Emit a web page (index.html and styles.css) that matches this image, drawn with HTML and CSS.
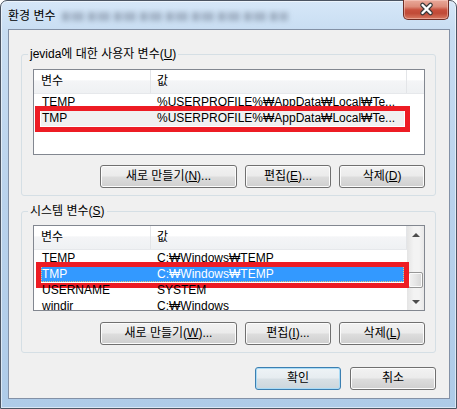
FILE: index.html
```html
<!DOCTYPE html>
<html lang="ko">
<head>
<meta charset="utf-8">
<title>환경 변수</title>
<link rel="stylesheet" href="styles.css">
</head>
<body>
<div class="window">
  <div class="titlebar">
    <span class="title">환경 변수</span>
    <span class="ghost" aria-hidden="true"></span>
    <div class="close">
      <svg width="44" height="17" viewBox="0 0 44 17">
        <path d="M18.5 4 L26.5 12 M26.5 4 L18.5 12" stroke="#3a3a3a" stroke-width="4.6" stroke-linecap="round"/>
        <path d="M18.5 4 L26.5 12 M26.5 4 L18.5 12" stroke="#ffffff" stroke-width="2.4" stroke-linecap="round"/>
      </svg>
    </div>
  </div>
  <div class="client">
    <fieldset class="group g1">
      <legend>jevida에 대한 사용자 변수(<u>U</u>)</legend>
      <div class="list">
        <div class="list-main">
          <div class="hdr"><span class="h1">변수</span><span class="h2">값</span><span class="h3"></span></div>
          <div class="row"><span class="c1">TEMP</span><span class="c2">%USERPROFILE%₩AppData₩Local₩Te...</span></div>
          <div class="row sel-gray"><span class="c1">TMP</span><span class="c2">%USERPROFILE%₩AppData₩Local₩Te...</span><span class="mark"></span></div>
        </div>
      </div>
      <div class="btns">
        <button class="btn w-new">새로 만들기(<u>N</u>)...</button>
        <button class="btn w-sm">편집(<u>E</u>)...</button>
        <button class="btn w-sm">삭제(<u>D</u>)</button>
      </div>
    </fieldset>

    <fieldset class="group g2">
      <legend>시스템 변수(<u>S</u>)</legend>
      <div class="list">
        <div class="list-main">
          <div class="hdr"><span class="h1">변수</span><span class="h2">값</span><span class="h3"></span></div>
          <div class="row"><span class="c1">TEMP</span><span class="c2">C:₩Windows₩TEMP</span></div>
          <div class="row sel-blue"><span class="c1">TMP</span><span class="c2">C:₩Windows₩TEMP</span><span class="mark mark2"></span></div>
          <div class="row"><span class="c1">USERNAME</span><span class="c2">SYSTEM</span></div>
          <div class="row"><span class="c1">windir</span><span class="c2">C:₩Windows</span></div>
        </div>
        <div class="sb">
          <div class="sb-btn"><span class="tri-up"></span></div>
          <div class="sb-track"><div class="sb-thumb"></div></div>
          <div class="sb-btn"><span class="tri-down"></span></div>
        </div>
      </div>
      <div class="btns">
        <button class="btn w-new">새로 만들기(<u>W</u>)...</button>
        <button class="btn w-sm">편집(<u>I</u>)...</button>
        <button class="btn w-sm">삭제(<u>L</u>)</button>
      </div>
    </fieldset>

    <div class="dlg-btns">
      <button class="btn w-dlg default">확인</button>
      <button class="btn w-dlg">취소</button>
    </div>
  </div>
</div>
</body>
</html>
```
FILE: styles.css
```css
* { box-sizing: border-box; }
html, body { margin: 0; padding: 0; }
body {
  width: 457px;
  height: 409px;
  overflow: hidden;
  background: #ffffff;
  font-family: "Liberation Sans", "DejaVu Sans", "Noto Sans CJK KR", sans-serif;
  font-size: 12px;
  color: #000;
}

.window {
  width: 457px;
  height: 409px;
  border: 1px solid #4b5462;
  border-radius: 7px 7px 0 0;
  background: linear-gradient(180deg, #d6e7f8 0px, #c8ddf2 30px, #b9d2ec 200px, #aecbe8 100%);
  box-shadow: inset 0 0 0 1px rgba(255, 255, 255, 0.55);
  padding: 0 6px 9px 7px;
  display: flex;
  flex-direction: column;
}

.titlebar {
  height: 28px;
  display: flex;
  align-items: flex-start;
  flex: none;
}
.title {
  padding-top: 7px;
  line-height: 17px;
  color: #000;
}
.ghost {
  margin-left: 6px;
  margin-top: 11px;
  width: 226px;
  height: 9px;
  background: repeating-linear-gradient(90deg, rgba(70, 80, 100, 0.35) 0 7px, rgba(70, 80, 100, 0.1) 7px 10px, rgba(70, 80, 100, 0.3) 10px 22px, transparent 22px 26px);
  filter: blur(2.5px);
}
.close {
  margin-left: auto;
  margin-right: 1px;
  margin-top: -1px;
  width: 46px;
  height: 20px;
  border: 1px solid #6e2d25;
  border-top: none;
  border-radius: 0 0 5px 5px;
  background: linear-gradient(180deg, #e9a99a 0%, #dd8c7a 35%, #c8503d 52%, #c04a37 70%, #d87a62 100%);
  box-shadow: inset 0 0 0 1px rgba(255, 220, 210, 0.45);
  display: flex;
  align-items: center;
  justify-content: center;
}
.close svg { display: block; }

.client {
  flex: 1;
  background: #f0f0f0;
  border: 1px solid #8391a6;
  padding: 17px 13px 8px 12px;
  display: flex;
  flex-direction: column;
}

.group {
  margin: 0;
  min-width: 0;
  border: 1px solid #d5dfe5;
  border-radius: 3px;
  padding: 8px 10px 7px 11px;
}
.g2 { margin-top: 8px; padding-top: 7px; }
.group legend {
  padding: 0 2px;
  margin-left: -5px;
  line-height: 14px;
  height: 14px;
}

.list {
  height: 86px;
  border: 1px solid #828790;
  background: #fff;
  display: flex;
  overflow: hidden;
}
.g1 .list { margin-bottom: 10px; }
.g2 .list { margin-bottom: 11px; }
.list-main {
  flex: 1;
  min-width: 0;
}

.hdr {
  height: 24px;
  display: flex;
  background: linear-gradient(180deg, #ffffff 0%, #ffffff 45%, #f4f5f7 46%, #eff1f3 100%);
  border-bottom: 1px solid #e6e8eb;
  line-height: 23px;
}
.hdr span { display: block; }
.h1 { width: 117px; padding-left: 7px; border-right: 1px solid #e3e5e8; }
.h2 { width: 256px; padding-left: 6px; border-right: 1px solid #e3e5e8; }
.h3 { flex: 1; }

.row {
  position: relative;
  display: flex;
  width: 363px;
  height: 16px;
  line-height: 16px;
  margin-left: 7px;
  white-space: nowrap;
}
.c1 { width: 109px; padding-left: 1px; flex: none; }
.c2 { padding-left: 7px; overflow: hidden; }
.sel-gray { background: #f0f0f0; }
.sel-blue {
  background: #3399ff;
  color: #fff;
  outline: 1px dotted #e9c27a;
  outline-offset: -1px;
}

.mark {
  position: absolute;
  top: -4px;
  bottom: -6px;
  left: -6px;
  right: -6px;
  border: 5px solid #ed1c24;
}
.mark2 { left: -5px; right: -5px; }

.sb {
  width: 17px;
  flex: none;
  display: flex;
  flex-direction: column;
  background: linear-gradient(90deg, #e4e4e4 0%, #f3f3f3 40%, #f3f3f3 70%, #e8e8e8 100%);
}
.sb-btn {
  height: 17px;
  flex: none;
  display: flex;
  align-items: center;
  justify-content: center;
}
.tri-up, .tri-down {
  width: 0;
  height: 0;
  border-left: 4px solid transparent;
  border-right: 4px solid transparent;
}
.tri-up { border-bottom: 4px solid #4d4d4d; }
.tri-down { border-top: 4px solid #4d4d4d; }
.sb-track {
  flex: 1;
  padding-top: 29px;
}
.sb-thumb {
  height: 16px;
  margin: 0 1px;
  border: 1px solid #979797;
  border-radius: 2px;
  background: linear-gradient(90deg, #f2f2f2 0%, #e6e6e6 50%, #d6d6d6 100%);
  box-shadow: inset 0 0 0 1px #fbfbfb;
}

.btns {
  display: flex;
  justify-content: flex-end;
  gap: 8px;
}
.btn {
  height: 23px;
  padding: 0;
  border: 1px solid #707070;
  border-radius: 3px;
  background: linear-gradient(180deg, #f2f2f2 0%, #ebebeb 48%, #dddddd 52%, #cfcfcf 100%);
  box-shadow: inset 0 0 0 1px #fcfcfc;
  font: inherit;
  color: #000;
  line-height: 21px;
  text-align: center;
  white-space: nowrap;
}
.w-new { width: 137px; }
.w-sm { width: 86px; }
.w-dlg { width: 86px; }
.default {
  border-color: #3c7fb1;
  background: linear-gradient(180deg, #eef3f6 0%, #e6ecf0 48%, #d8e0e5 52%, #ccd6dc 100%);
  box-shadow: inset 0 0 0 1px #a9dbf6;
}

.dlg-btns {
  margin-top: 14px;
  display: flex;
  justify-content: flex-end;
  gap: 9px;
}
```
